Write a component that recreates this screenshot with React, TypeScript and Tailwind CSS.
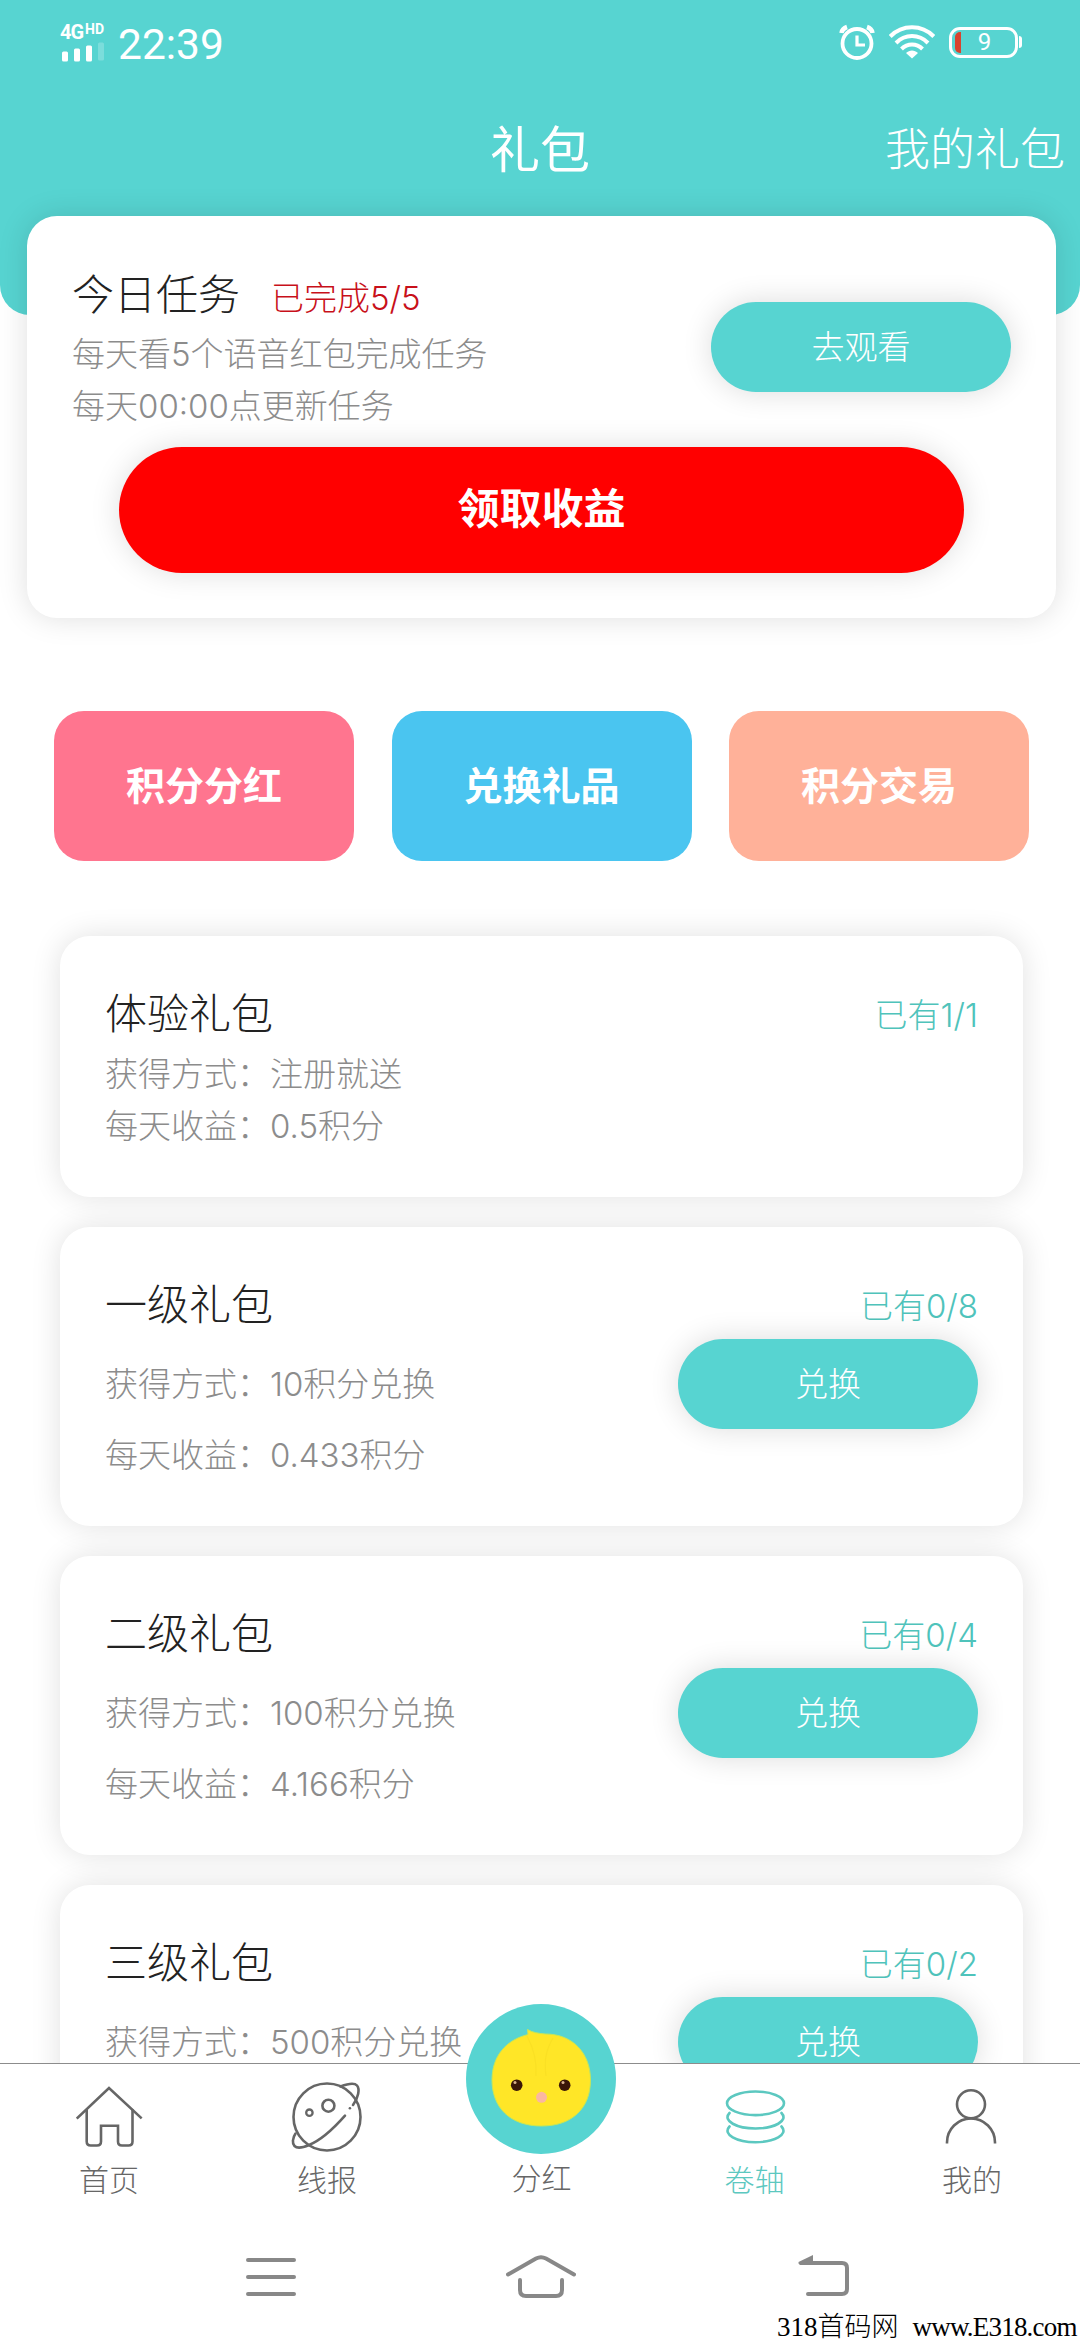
import React from 'react';

interface GiftPack {
  name: string;
  owned: string;
  method: string;
  income?: string;
  canExchange: boolean;
}

const giftPacks: GiftPack[] = [
  { name: '体验礼包', owned: '已有1/1', method: '注册就送', income: '0.5积分', canExchange: false },
  { name: '一级礼包', owned: '已有0/8', method: '10积分兑换', income: '0.433积分', canExchange: true },
  { name: '二级礼包', owned: '已有0/4', method: '100积分兑换', income: '4.166积分', canExchange: true },
  { name: '三级礼包', owned: '已有0/2', method: '500积分兑换', canExchange: true },
];

const shortcuts = [
  { label: '积分分红', color: 'bg-[#ff758f]' },
  { label: '兑换礼品', color: 'bg-[#4ac5f0]' },
  { label: '积分交易', color: 'bg-[#ffb199]' },
];

const StatusBar: React.FC = () => (
  <div className="flex h-[84px] items-center justify-between pl-[60px] pr-[58px] text-white">
    <div className="flex items-center">
      <div className="flex w-[47px] flex-col">
        <div className="flex items-start font-[Roboto] font-bold leading-none">
          <span className="w-[25px] text-[20px] leading-[18px] tracking-[-1px]">4G</span>
          <span className="text-[14px] leading-[13px]">HD</span>
        </div>
        <svg className="mt-px" width="47" height="20" viewBox="0 0 47 20" fill="#fff">
          <rect x="2" y="9.5" width="6" height="10" rx="1.5" />
          <rect x="14" y="6.5" width="6" height="13" rx="1.5" />
          <rect x="26" y="3.5" width="6" height="16" rx="1.5" />
          <rect x="38" y="0.5" width="6" height="18" rx="1.5" opacity="0.22" />
        </svg>
      </div>
      <span className="ml-[11px] mt-[5px] font-[Roboto] text-[42.5px] font-normal leading-[44px]">22:39</span>
    </div>

    <div className="flex items-center gap-[14px]">
      <svg width="36" height="36" viewBox="0 0 36 36" fill="none" stroke="#fff">
        <circle cx="18" cy="19.5" r="14.5" strokeWidth="3.8" />
        <path d="M18 11.5v9.5h8" strokeWidth="3.2" />
        <path d="M2.500 9c.5-3 2.500-5 5.500-6M33.500 9c-.5-3-2.500-5-5.500-6" strokeWidth="4.500" />
      </svg>
      <svg width="46" height="36" viewBox="0 0 46 36" fill="none" stroke="#fff" strokeWidth="4">
        <path d="M1.200 12.500c12-12.300 31.600-12.300 43.600 0" />
        <path d="M7 19c9-9.200 23-9.200 32 0" />
        <path d="M12.500 25c6-6 15-6 21 0" />
        <path d="M17 29c3.500-3.400 8.500-3.400 12 0l-6 5.500z" fill="#fff" stroke="none" />
      </svg>
      <div className="flex items-center">
        <div className="flex h-[31px] w-[69px] items-center justify-center overflow-hidden rounded-[11px] border-[3px] border-white font-[Roboto] text-[24px] font-normal leading-none">
          <span className="-ml-[9px] mr-[17px] h-[21px] w-[6px] rounded-l-[5px] bg-[#d8432f]"></span>
          <span className="mr-[12px]">9</span>
        </div>
        <span className="ml-px h-[12px] w-[3px] rounded-r-[3px] bg-white"></span>
      </div>
    </div>
  </div>
);

const TaskCard: React.FC = () => (
  <section className="relative ml-[27px] -mt-[99px] mr-[24px] h-[402px] rounded-[30px] bg-white px-[45px] pt-[50px] shadow-[0_0_30px_rgba(0,0,0,0.13)]">
    <div className="flex justify-between">
      <div>
        <div className="flex h-[58px] items-center">
          <h2 className="text-[42px] leading-[56px] text-[#222]">今日任务</h2>
          <span className="ml-[31px] mt-[5px] text-[33px] leading-[50px] text-[#c8101a]">已完成5/5</span>
        </div>
        <p className="mt-[4px] text-[33px] leading-[52px] text-[#8c8c8c]">每天看5个语音红包完成任务</p>
        <p className="text-[33px] leading-[52px] text-[#8c8c8c]">每天00:00点更新任务</p>
      </div>
      <button className="mt-[36px] h-[90px] w-[300px] rounded-full bg-[#57d4d1] text-[33px] leading-[90px] text-white shadow-[0_0_30px_rgba(0,0,0,0.14)]">
        去观看
      </button>
    </div>
    <button className="ml-[47px] mt-[15px] block h-[126px] w-[845px] rounded-full bg-[#f00] pb-[2px] text-[42px] font-bold leading-[124px] text-white shadow-[0_0_30px_rgba(0,0,0,0.13)]">
      领取收益
    </button>
  </section>
);

const GiftCard: React.FC<{ pack: GiftPack }> = ({ pack }) => (
  <div
    className={`shrink-0 rounded-[30px] bg-white px-[45px] pt-[49px] shadow-[0_0_30px_rgba(0,0,0,0.12)] ${
      pack.canExchange ? 'h-[299px]' : 'h-[261px]'
    }`}
  >
    <div className="flex h-[58px] items-center justify-between">
      <h3 className="text-[42px] leading-[58px] text-[#222]">{pack.name}</h3>
      <span className="mt-[2px] text-[33px] leading-[44px] text-[#4fc3bb]">{pack.owned}</span>
    </div>
    {pack.canExchange ? (
      <>
        <div className="mt-[5px] flex h-[90px] items-center justify-between">
          <p className="text-[33px] leading-[44px] text-[#8c8c8c]">获得方式：{pack.method}</p>
          <button className="h-[90px] w-[300px] rounded-full bg-[#57d4d1] text-[33px] leading-[90px] text-white shadow-[0_0_30px_rgba(0,0,0,0.14)]">
            兑换
          </button>
        </div>
        {pack.income && <p className="mt-px text-[33px] leading-[50px] text-[#8c8c8c]">每天收益：{pack.income}</p>}
      </>
    ) : (
      <div className="mt-[5px] text-[33px] leading-[52px] text-[#8c8c8c]">
        <p>获得方式：{pack.method}</p>
        <p>每天收益：{pack.income}</p>
      </div>
    )}
  </div>
);

const TabItem: React.FC<{ label: string; active?: boolean; className?: string; children: React.ReactNode }> = ({
  label,
  active,
  className = '',
  children,
}) => (
  <div className={`flex w-[216px] flex-col items-center pt-[13px] ${active ? 'text-[#5cc8c0]' : 'text-[#666]'} ${className}`}>
    <svg width="80" height="80" viewBox="0 0 80 80" fill="none" stroke="currentColor" strokeWidth="2.6" strokeLinecap="round">
      {children}
    </svg>
    <span className="text-[30px] leading-[46px]">{label}</span>
  </div>
);

const TabBar: React.FC = () => (
  <nav className="flex h-[140px] border-t border-[#8c8c8c] bg-white">
    <TabItem label="首页" className="pl-[2px]">
      <path d="M8.700 40.700 40 11l31.700 29.500" strokeLinecap="square" />
      <path d="M17.700 33v31.500q0 4 4 4h6.300q4 0 4-4V48.700h17v15.800q0 4 4 4h6.500q4 0 4-4V33" />
    </TabItem>
    <TabItem label="线报" className="pl-[6px]">
      <circle cx="40" cy="40" r="33.500" />
      <circle cx="22.400" cy="35.700" r="3.200" strokeWidth="2.300" />
      <circle cx="41.400" cy="28.700" r="6" />
      <path d="M53.500 9.500C60 7 67 5 70 8.500s1.500 12-4 19.500" />
      <path d="M62.900 31.200v.1" />
      <path d="M58 38.700C48 50 35 63 22 68c-7 3-12 3.500-14.500 1S5.500 61 8.500 56.500" />
    </TabItem>
    <div className="relative flex w-[216px] flex-col items-center text-[#666]">
      <svg className="-mt-[60px] ml-[2px] shrink-0" width="150" height="150" viewBox="0 0 150 150">
        <circle cx="75" cy="75" r="75" fill="#57d4d1" />
        <path
          d="M61.500 25.500c5 3 11 4 18 4.500 28 0 45 20 45 46 0 28-18 46-49 46S26 104 26 76c0-24 14-40 36-45.500z"
          fill="#ffe627"
          stroke="#c4e65a"
          strokeWidth="1"
        />
        <path d="M61 32c7 13 10 25 9 40M87 34c-7 12-9 22-7 38" stroke="#fae024" strokeWidth="1.200" fill="none" />
        <circle cx="50.700" cy="81.200" r="5.800" fill="#3a1608" />
        <circle cx="98.700" cy="81.200" r="5.800" fill="#3a1608" />
        <circle cx="49" cy="78.500" r="1.500" fill="#d9b08c" />
        <circle cx="97" cy="78.500" r="1.500" fill="#d9b08c" />
        <circle cx="75.500" cy="93.300" r="5.500" fill="#fbb7a0" />
      </svg>
      <span className="ml-[3px] text-[30px] leading-[48px]">分红</span>
    </div>
    <TabItem label="卷轴" active className="pr-[3px]">
      <ellipse cx="40.500" cy="26.300" rx="28.500" ry="11.800" />
      <path d="M14.500 36C7 44 22 51.500 40.500 51.500S74 44 66.500 36" />
      <path d="M14.500 49.500C7 57.500 22 65.200 40.500 65.200S74 57.500 66.500 49.500" />
    </TabItem>
    <TabItem label="我的">
      <circle cx="39" cy="27.300" r="14" />
      <path d="M15 66.500v-1a24 24 0 0 1 48 0v1" strokeLinecap="butt" />
    </TabItem>
  </nav>
);

const SystemNav: React.FC = () => (
  <div className="relative flex h-[137px] items-start bg-white pl-[246px] pt-[52px] text-[#888]">
    <svg width="50" height="42" viewBox="0 0 50 42" fill="none" stroke="currentColor" strokeWidth="4" strokeLinecap="round">
      <path d="M2 5h46M2 22h46M2 39h46" />
    </svg>
    <svg className="ml-[210px]" width="70" height="44" viewBox="0 0 70 44" fill="none" stroke="currentColor" strokeWidth="4" strokeLinecap="round">
      <path d="M2 19.500 30 3.500q5-2.600 10 0l28 16" />
      <path d="M14 25v10q0 6 6 6h30q6 0 6-6V25" />
    </svg>
    <svg className="ml-[222px]" width="52" height="42" viewBox="0 0 52 42" fill="none" stroke="currentColor" strokeWidth="4" strokeLinecap="round">
      <path d="M10 8h34q5 0 5 5v21q0 5-5 5H10" />
      <path d="M.5 7 15 0v10H2q-2-1-1.500-3z" fill="currentColor" stroke="none" />
    </svg>
    <div className="absolute bottom-0 right-0 flex w-[303px] items-baseline whitespace-pre font-['Liberation_Serif','Noto_Sans_CJK_SC',serif] text-[27px] leading-[25px] text-black">
      <span>318首码网</span>
      <span className="ml-[14px] tracking-[-0.8px]">www.E318.com</span>
    </div>
  </div>
);

const App: React.FC = () => {
  return (
    <div className="flex h-[2340px] w-[1080px] flex-col overflow-hidden bg-white font-['Inter','Noto_Sans_CJK_SC',sans-serif] font-light">
      <main className="min-h-0 flex-1 overflow-hidden">
        <header className="h-[315px] rounded-b-[30px] bg-[#57d4d1] text-white">
          <StatusBar />
          {/* Title row: equal side columns keep the title centred */}
          <div className="grid h-[132px] grid-cols-3 items-center pr-[15px]">
            <span></span>
            <h1 className="pl-[15px] text-center text-[50px] font-normal leading-[66px]">礼包</h1>
            <span className="text-right text-[45px] leading-[66px]">我的礼包</span>
          </div>
        </header>

        <TaskCard />

        <div className="mt-[93px] flex gap-[37.5px] pl-[54px]">
          {shortcuts.map((item) => (
            <button key={item.label} className={`h-[150px] w-[300px] rounded-[30px] text-[39px] font-bold leading-[150px] text-white ${item.color}`}>
              {item.label}
            </button>
          ))}
        </div>

        <div className="ml-[60px] mt-[75px] flex w-[963px] flex-col gap-[30px]">
          {giftPacks.map((pack) => (
            <GiftCard key={pack.name} pack={pack} />
          ))}
        </div>
      </main>

      <TabBar />
      <SystemNav />
    </div>
  );
};

export default App;
